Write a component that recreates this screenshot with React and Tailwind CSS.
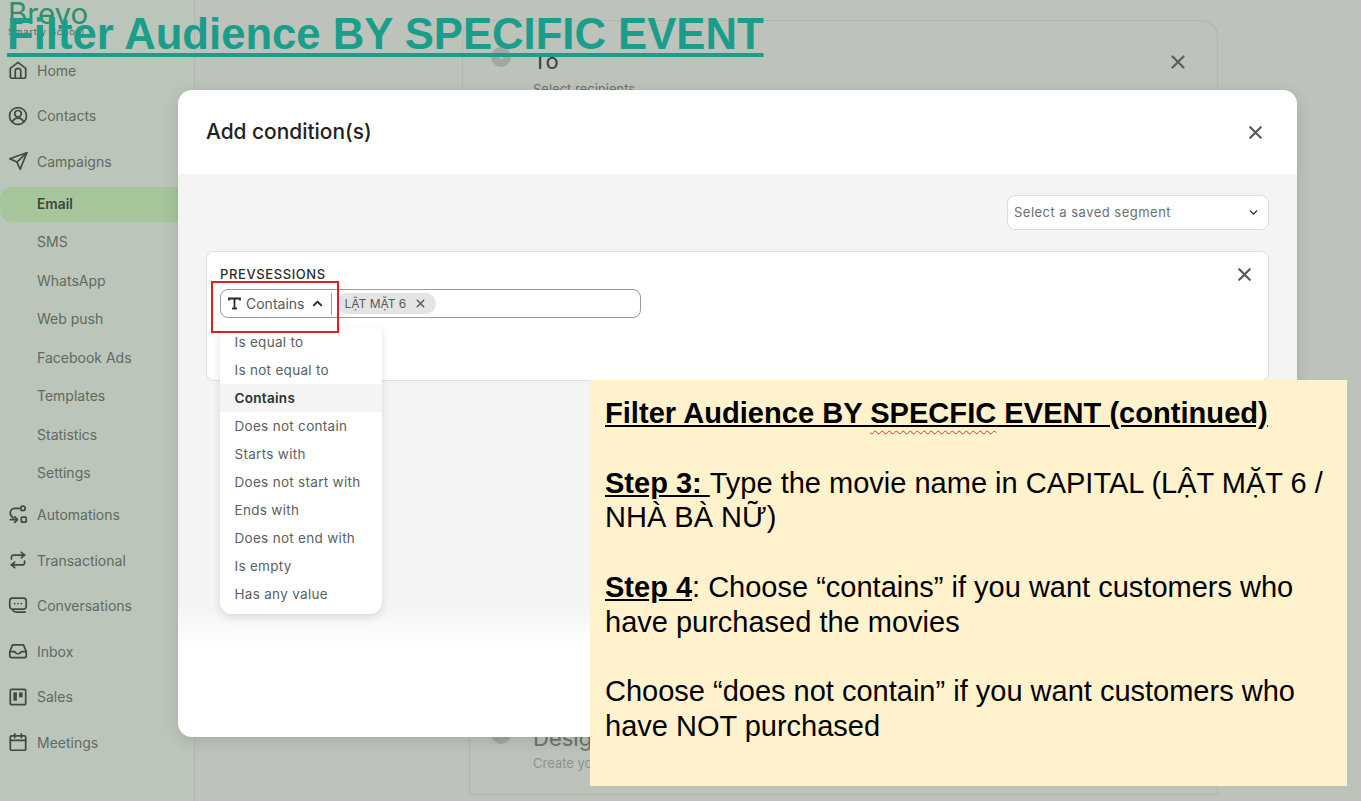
import React from "react";
import { X, ChevronDown, ChevronUp } from "lucide-react";

const S = ({ children }) => (
  <svg width="22" height="22" viewBox="0 0 20 20" fill="none" stroke="#3f4a40" strokeWidth="1.55" strokeLinecap="round" strokeLinejoin="round" className="shrink-0">
    {children}
  </svg>
);

const icons = {
  home: <S><path d="M3 8.500 10 3l7 5.500V16a1.500 1.500 0 0 1-1.500 1.500h-11A1.500 1.500 0 0 1 3 16z" /><path d="M7.500 17.500V11a2.500 2.500 0 0 1 5 0v6.500" /></S>,
  contacts: <S><circle cx="10" cy="10" r="7.700" /><circle cx="10" cy="8" r="3" /><path d="M4.800 15.500c1-2.300 3-3.500 5.200-3.500s4.200 1.200 5.200 3.500" /></S>,
  campaigns: <S><path d="M18 2.500 2.500 8l6.500 3 3 6.500z" /><path d="M18 2.500 9 11" /></S>,
  automations: <S><circle cx="14.500" cy="4" r="2" /><rect x="13" y="12" width="4.500" height="4.500" rx="0.800" /><path d="M11 4H7a4 4 0 0 0-4 4c0 2 1 3.500 2.500 4.500" /><path d="M3 14.200h6" /><path d="m7 11.700 2.500 2.500L7 16.700" /></S>,
  transactional: <S><path d="M4 9V7.500A2 2 0 0 1 6 5.500h10" /><path d="m13 3 3 2.500L13 8" /><path d="M16 11v1.500a2 2 0 0 1-2 2H4" /><path d="m7 12-3 2.500L7 17" /></S>,
  conversations: <S><path d="M5 2.800h10A2.500 2.500 0 0 1 17.500 5.300v5a2.500 2.500 0 0 1-2.500 2.500H7c-1.500 0-2 .8-1.200 1.700.7.800 2 1 3.200 1h7.500" /><path d="M5 12.800a2.500 2.500 0 0 1-2.500-2.500v-5A2.500 2.500 0 0 1 5 2.800" /><path d="M7 7.800h.01M10 7.800h.01M13 7.800h.01" /></S>,
  inbox: <S><path d="M2.500 10.500 5 4.500h10l2.500 6v4a1.500 1.500 0 0 1-1.500 1.500H4a1.500 1.500 0 0 1-1.500-1.500z" /><path d="M2.500 10.500H7c.5 1.500 1.500 2 3 2s2.500-.5 3-2h4.500" /></S>,
  sales: <S><rect x="3" y="3" width="14" height="14" rx="1.200" /><rect x="5.800" y="5.800" width="3.200" height="7.500" fill="#3f4a40" stroke="none" /><rect x="11" y="5.800" width="3.200" height="4.500" fill="#3f4a40" stroke="none" /></S>,
  meetings: <S><rect x="3" y="4.500" width="14" height="13" rx="1.200" /><path d="M3 8.500h14M7 2.500v3.500M13 2.500v3.500" /></S>,
};

const mainTop = [
  ["Home", "home"],
  ["Contacts", "contacts"],
  ["Campaigns", "campaigns"],
];
const subItems = ["Email", "SMS", "WhatsApp", "Web push", "Facebook Ads", "Templates", "Statistics", "Settings"];
const mainBottom = [
  ["Automations", "automations"],
  ["Transactional", "transactional"],
  ["Conversations", "conversations"],
  ["Inbox", "inbox"],
  ["Sales", "sales"],
  ["Meetings", "meetings"],
];

const MainRow = ({ label, icon }) => (
  <div className="flex h-[45.5px] items-center gap-[8px] pl-[7px]">
    {icons[icon]}
    <span className="text-[14px] text-[#5f6a60]">{label}</span>
  </div>
);

const options = ["Is equal to", "Is not equal to", "Contains", "Does not contain", "Starts with", "Does not start with", "Ends with", "Does not end with", "Is empty", "Has any value"];

export default function App() {
  return (
    <div className="relative h-[801px] w-[1361px] overflow-hidden bg-[#bdc2ba] font-['Inter',sans-serif]">
      <div className="flex h-full">
        <aside className="h-full w-[195px] shrink-0 border-r border-[#a9bcae] bg-[#bcc5b9]">
          <div className="h-[47.25px] pl-[8px]">
            <div className="text-[29.500px] font-normal leading-[26px] text-[#2c8f6e]">Brevo</div>
            <div className="mt-[1px] text-[9px] leading-[10px] tracking-[0.9px] text-[#565f56]">Smartly School</div>
          </div>
          {mainTop.map(([l, i]) => <MainRow key={l} label={l} icon={i} />)}
          {subItems.map((l) => (
            <div key={l} className="flex h-[38.5px] items-center">
              {l === "Email" ? (
                <div className="mt-[2px] flex h-[35px] w-full items-center rounded-xl bg-[#a6c59b] pl-[37px] text-[13.8px] font-semibold text-[#3c473c]">{l}</div>
              ) : (
                <span className="pl-[37px] text-[14px] text-[#5f6a60]">{l}</span>
              )}
            </div>
          ))}
          {mainBottom.map(([l, i]) => <MainRow key={l} label={l} icon={i} />)}
        </aside>
        <main className="h-full flex-1 overflow-hidden pl-[267px] pt-[20px]">
          <div className="flex h-[676px] w-[756px] items-start justify-between rounded-t-2xl border border-[#b1b7ad] pl-[28px] pr-[28px] pt-[25px]">
            <div className="flex gap-[22px]">
              <div className="mt-[1px] flex h-[20px] w-[20px] items-center justify-center rounded-full bg-[#a2a7a0]">
                <div className="h-[3px] w-[3px] rounded-full bg-[#bdc2ba]" />
              </div>
              <div>
                <div className="text-[22px] leading-[30px] text-[#3a3d39]">To</div>
                <div className="mt-[4px] text-[13px] text-[#6e736c]">Select recipients</div>
              </div>
            </div>
            <X size={22} strokeWidth={2.500} className="mt-[5px] text-[#5c605a]" />
          </div>
          <div className="ml-[7px] flex h-[99px] w-[749px] gap-[22px] border-x border-b border-[#b1b7ad] pl-[21px] pt-[27px]">
            <div className="mt-[1px] h-[20px] w-[20px] rounded-full bg-[#a2a7a0]" />
            <div>
              <div className="text-[22px] leading-[30px] text-[#6e736c]">Design</div>
              <div className="mt-[1px] text-[13px] text-[#8e938c]">Create your content</div>
            </div>
          </div>
        </main>
      </div>

      {/* Modal */}
      <div className="absolute left-[178px] top-[90px] flex h-[647px] w-[1119px] flex-col overflow-hidden rounded-[14px] bg-white shadow-[0_4px_16px_rgba(0,0,0,0.12)]">
        <div className="flex h-[84px] shrink-0 items-center justify-between pl-[28px] pr-[31px]">
          <h2 className="text-[20.900px] font-medium leading-none text-[#1f2320]">Add condition(s)</h2>
          <X size={21} strokeWidth={2.500} className="text-[#555a56]" />
        </div>
        <div className="h-[471px] shrink-0 bg-[linear-gradient(to_bottom,#f4f4f4_92%,#ffffff_100%)] px-[28px] pt-[21px]">
          <div className="flex justify-end">
            <div className="flex h-[35px] w-[262px] items-center justify-between rounded-lg border border-[#dcdcdc] bg-white pl-[6px] pr-[8px] text-[13px] tracking-[0.48px] text-[#6b6f72]">
              Select a saved segment
              <ChevronDown size={13} strokeWidth={2.500} className="text-[#1f2937]" />
            </div>
          </div>
          <div className="mt-[21px] h-[130px] w-[1063px] rounded-lg border border-[#dedede] bg-white pl-[13px] pr-[14px] pt-[14px]">
            <div className="flex items-start justify-between">
              <div className="text-[13px] font-medium leading-[16px] tracking-[0.6px] text-[#2b2f2c]">PREVSESSIONS</div>
              <X size={21} strokeWidth={2.500} className="-mt-[2px] -mr-[1px] text-[#555a56]" />
            </div>
            <div className="mt-[4px] flex h-[29px] w-[421px] items-center rounded-lg border border-[#9b9b9b] bg-white pl-[7px]">
              <svg width="13" height="13" viewBox="0 0 13 13" fill="none" stroke="#1f2937" strokeWidth="1.8" className="shrink-0">
                <path d="M1 3.500V1.500h11v2" />
                <path d="M6.500 1.500V11.500" />
                <path d="M4 11.500h5" />
              </svg>
              <span className="ml-[5px] text-[14px] text-[#555a5e]">Contains</span>
              <ChevronUp size={15} strokeWidth={3} className="ml-[6px] text-[#1f2937]" />
              <div className="ml-[6px] h-[22px] w-[1px] bg-[#9d9d9d]" />
              <div className="ml-[5px] flex h-[21px] items-center gap-[8px] rounded-full bg-[#e4e4e4] pl-[7px] pr-[9px]">
                <span className="text-[12px] leading-none text-[#555a5e]">LẬT MẶT 6</span>
                <X size={13} strokeWidth={2.500} className="text-[#555a5e]" />
              </div>
            </div>
          </div>
        </div>
      </div>

      {/* Dropdown */}
      <ul className="absolute left-[220px] top-[328px] w-[162px] rounded-b-xl bg-white pb-[6px] shadow-[0_3px_8px_rgba(0,0,0,0.12)]">
        {options.map((o) => (
          <li key={o} className={"flex h-[28px] items-center pl-[14.500px] text-[13.500px] tracking-[0.3px] " + (o === "Contains" ? "bg-[#f4f4f4] font-semibold text-[#2b2f2c]" : "text-[#5a5f62]")}>{o}</li>
        ))}
      </ul>

      {/* Red annotation */}
      <div className="absolute left-[211px] top-[281px] h-[52px] w-[128px] border-2 border-[#e0201f]" />

      {/* Slide title */}
      <h1 className="absolute left-[7px] top-[8px] whitespace-nowrap font-['Liberation_Sans',Arial,sans-serif] text-[43.650px] font-bold leading-[52px] text-[#1a9d8a] underline decoration-[4px] underline-offset-[4px]">
        Filter Audience BY SPECIFIC EVENT
      </h1>

      {/* Yellow note */}
      <div className="absolute left-[590px] top-[380px] h-[406px] w-[757px] bg-[#fff2cc] pl-[15px] pr-[10px] pt-[16px] font-['Liberation_Sans',Arial,sans-serif] text-[29px] leading-[34.800px] text-black">
        <p className="text-[29.100px] font-bold underline">
          Filter Audience BY <span className="underline decoration-wavy decoration-[#e03030] decoration-1 underline-offset-[7px]">SPECFIC</span> EVENT (continued)
        </p>
        <p className="mt-[34.800px]"><b className="underline">Step 3: </b>Type the movie name in CAPITAL (LẬT MẶT 6 / NHÀ BÀ NỮ)</p>
        <p className="mt-[34.800px]"><b className="underline">Step 4</b>: Choose “contains” if you want customers who have purchased the movies</p>
        <p className="mt-[34.800px]">Choose “does not contain” if you want customers who have NOT purchased</p>
      </div>
    </div>
  );
}
